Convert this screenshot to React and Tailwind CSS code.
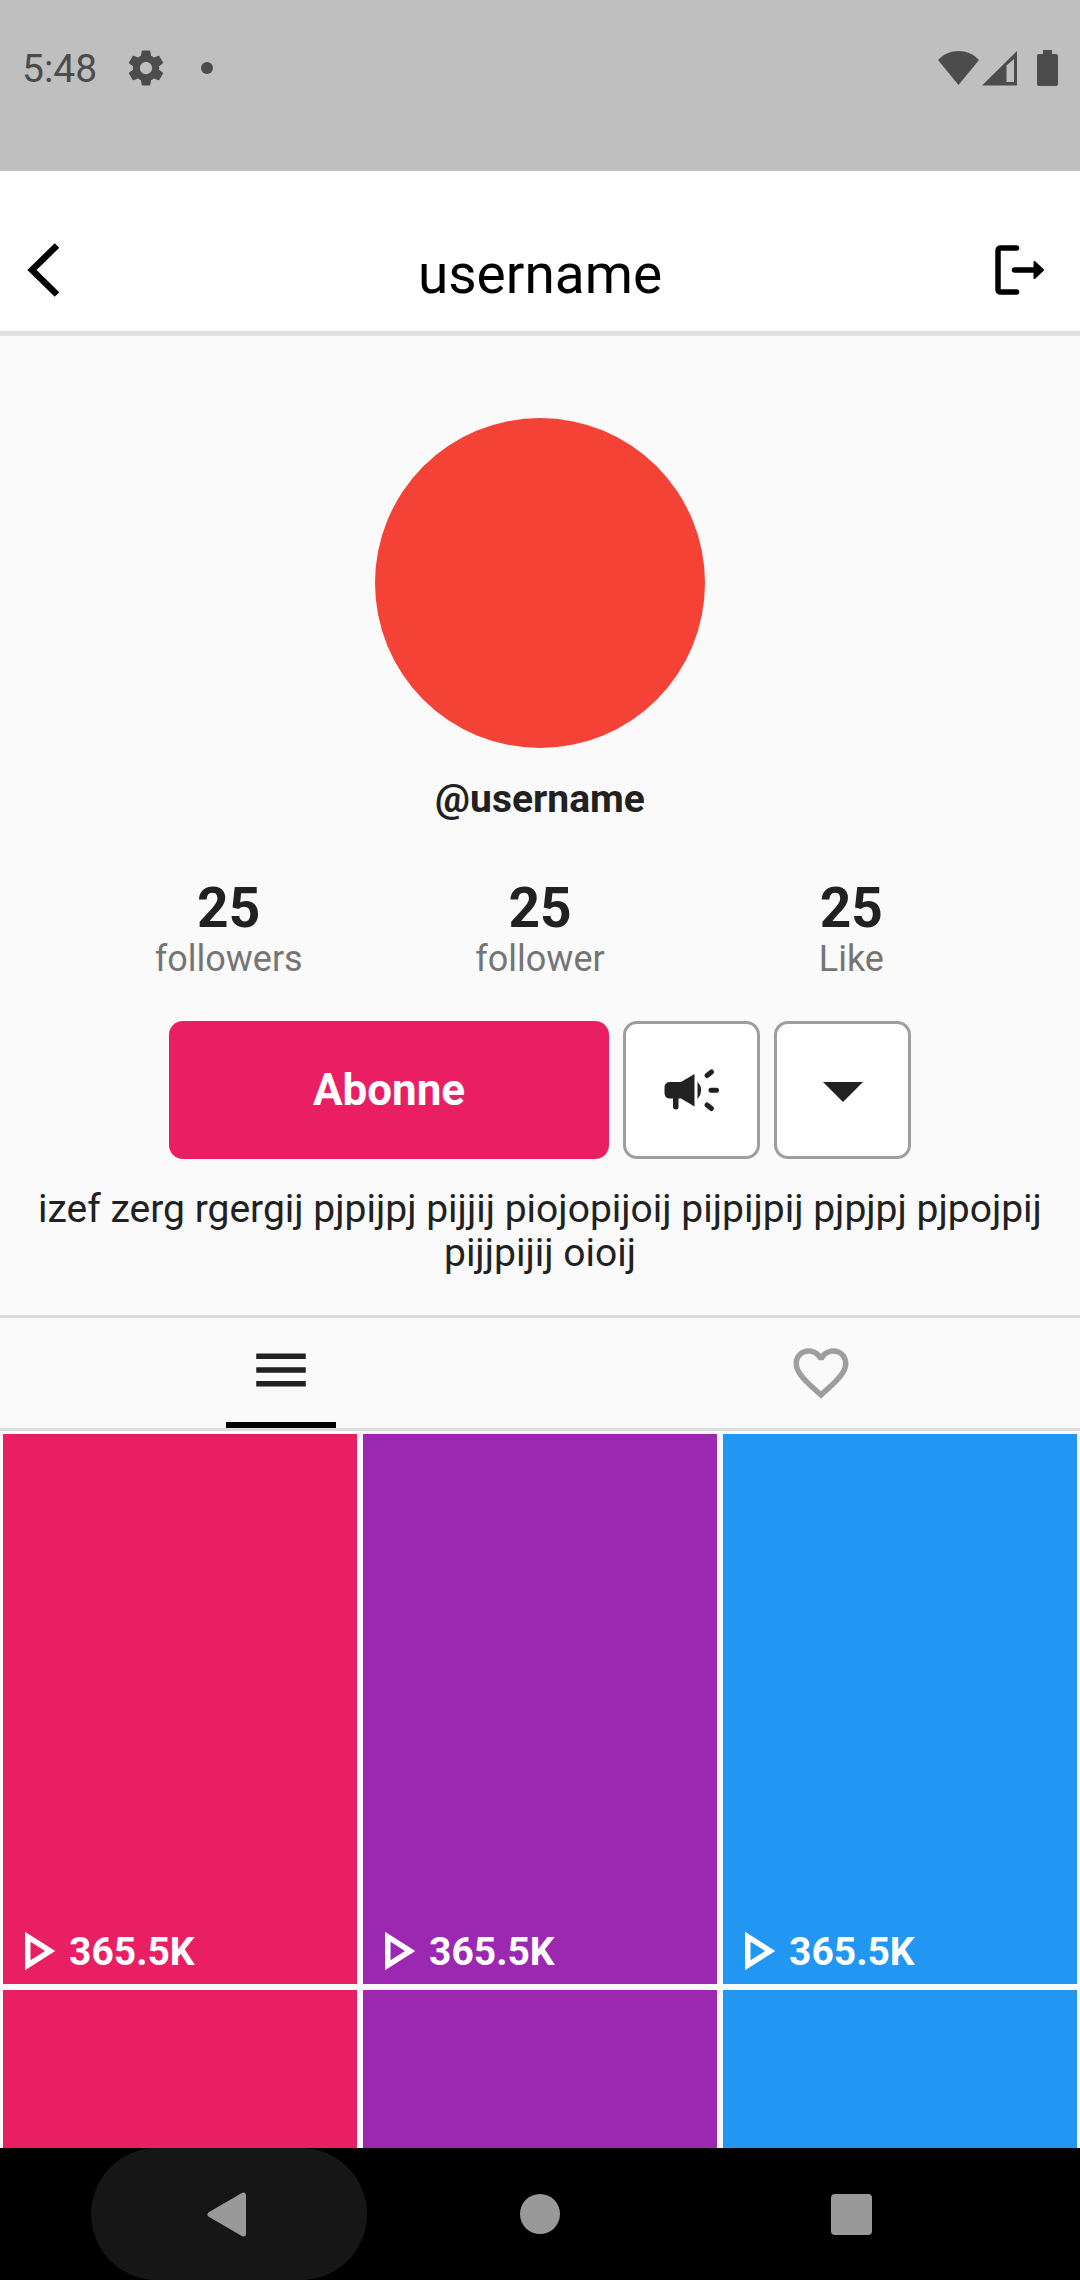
import { useState } from "react";

const STATS = [
  { value: "25", label: "followers" },
  { value: "25", label: "follower" },
  { value: "25", label: "Like" },
];

const VIDEOS = [
  { id: 1, color: "bg-[#e91e63]", views: "365.5K" },
  { id: 2, color: "bg-[#9c27b0]", views: "365.5K" },
  { id: 3, color: "bg-[#2196f3]", views: "365.5K" },
  { id: 4, color: "bg-[#e91e63]" },
  { id: 5, color: "bg-[#9c27b0]" },
  { id: 6, color: "bg-[#2196f3]" },
];

function StatusBar() {
  return (
    <div className="flex h-[171px] shrink-0 items-start justify-between bg-[#bfbfbf] px-[22px] pt-[46px] text-[#4c4c4c]">
      <div className="flex h-[44px] items-center">
        <span className="pt-[2px] text-[39px] leading-[46px]">5:48</span>
        <svg viewBox="0 0 24 24" className="ml-[28px] size-[42px]" fill="currentColor" aria-hidden="true">
          <path d="M19.43 12.98c.04-.32.07-.64.07-.98s-.03-.66-.07-.98l2.11-1.65c.19-.15.24-.42.12-.64l-2-3.46c-.12-.22-.39-.3-.61-.22l-2.49 1c-.52-.4-1.08-.73-1.69-.98l-.38-2.65C14.46 2.18 14.25 2 14 2h-4c-.25 0-.46.18-.49.42l-.38 2.65c-.61.25-1.17.59-1.69.98l-2.49-1c-.23-.09-.49 0-.61.22l-2 3.46c-.13.22-.07.49.12.64l2.11 1.65c-.04.32-.07.65-.07.98s.03.66.07.98l-2.11 1.65c-.19.15-.24.42-.12.64l2 3.46c.12.22.39.3.61.22l2.49-1c.52.4 1.08.73 1.69.98l.38 2.65c.03.24.24.42.49.42h4c.25 0 .46-.18.49-.42l.38-2.65c.61-.25 1.17-.59 1.69-.98l2.49 1c.23.09.49 0 .61-.22l2-3.46c.12-.22.07-.49-.12-.64l-2.11-1.65zM12 15.5c-1.93 0-3.5-1.57-3.5-3.5s1.57-3.5 3.5-3.5 3.5 1.57 3.5 3.5-1.57 3.5-3.5 3.5z" />
        </svg>
        <span className="ml-[34px] size-3 rounded-full bg-[#4c4c4c]" />
      </div>
      <div className="flex h-[44px] items-center">
        <svg viewBox="0 0 41 36" className="h-[36px] w-[41px]" fill="currentColor" aria-hidden="true">
          <path d="M0 10C11 -2 30 -2 41 10L20.500 35Z" />
        </svg>
        <svg viewBox="0 0 36 36" className="ml-[3px] size-[36px]" fill="currentColor" aria-hidden="true">
          <path fillRule="evenodd" d="M0 35.500L35 1V35.500H0ZM24.500 15.500V32H32V9Z" />
        </svg>
        <svg viewBox="0 0 21 36" className="ml-[19px] h-[36px] w-[21px]" fill="currentColor" aria-hidden="true">
          <path d="M6 0H15V4H19Q21 4 21 6V34Q21 36 19 36H2Q0 36 0 34V6Q0 4 2 4H6Z" />
        </svg>
      </div>
    </div>
  );
}

function Header() {
  return (
    <header className="grid shrink-0 grid-cols-[1fr_auto_1fr] items-start border-b-[5px] border-[#dfdfdf] bg-white px-[11px] pt-[66px] pb-[25px] text-black">
      <button type="button" aria-label="Back" className="size-[66px]">
        <svg viewBox="0 0 66 66" className="size-full" fill="none" stroke="currentColor" strokeWidth="6.5">
          <path d="M46 8.500L21 33L46 57.500" />
        </svg>
      </button>
      <h1 className="pt-[5px] text-[55px] leading-[64px]">username</h1>
      <button type="button" aria-label="Log out" className="mr-4 size-[66px] justify-self-end">
        <svg viewBox="0 0 66 66" className="size-full" fill="none" stroke="currentColor" strokeWidth="5.5" strokeLinecap="round">
          <path d="M29.500 11H14Q11 11 11 14V52Q11 55 14 55H29.500" />
          <path d="M27.500 33H48" />
          <path d="M47.500 25L56 33L47.500 41Z" fill="currentColor" strokeWidth="2" strokeLinejoin="round" />
        </svg>
      </button>
    </header>
  );
}

function Stats() {
  return (
    <dl className="mt-[56px] grid w-full grid-cols-3 px-[73px] text-center">
      {STATS.map((stat) => (
        <div key={stat.label} className="flex flex-col-reverse">
          <dt className="text-[36px] leading-[40px] text-[#757575]">{stat.label}</dt>
          <dd className="text-[55px] leading-[62px] font-bold">{stat.value}</dd>
        </div>
      ))}
    </dl>
  );
}

function Actions() {
  const square =
    "flex h-[138px] w-[137px] items-center justify-center rounded-[14px] border-[3px] border-[#9e9e9e] bg-white";
  return (
    <div className="mt-[42px] flex justify-center gap-[14px]">
      <button type="button" className="h-[138px] w-[440px] rounded-[14px] bg-[#e91e63] text-[44px] font-bold text-white">
        Abonne
      </button>
      <button type="button" aria-label="Announcements" className={square}>
        <svg viewBox="0 0 66 66" className="size-[66px]" fill="currentColor" aria-hidden="true">
          <path d="M10.500 25H22L35.500 17V49.500L22 41.500H19.500V50Q19.500 52.500 17 52.500Q14 52.500 14 50V41.500H10.500Q5.500 41 5.500 36V30.500Q5.500 25.500 10.500 25Z" />
          <path d="M38.500 24.500Q46 33 38.500 42Z" />
          <path d="M48 18.500L52.500 15M52 33.300H57.500M48 48L52.500 51.500" fill="none" stroke="currentColor" strokeWidth="5" strokeLinecap="round" />
        </svg>
      </button>
      <button type="button" aria-label="More" className={square}>
        <svg viewBox="0 0 24 24" className="size-[96px] shrink-0" fill="currentColor" aria-hidden="true">
          <path d="M7 10l5 5 5-5z" />
        </svg>
      </button>
    </div>
  );
}

function Tabs({ tab, onChange }) {
  return (
    <div role="tablist" className="flex h-[116px] items-stretch justify-around border-y-[3px] border-[#dddddd]">
      <button
        type="button"
        role="tab"
        aria-label="Videos"
        aria-selected={tab === "videos"}
        onClick={() => onChange("videos")}
        className={`flex w-[110px] items-center justify-center border-b-[6px] ${tab === "videos" ? "border-black text-[#212121]" : "border-transparent text-[#9e9e9e]"}`}
      >
        <svg viewBox="0 0 24 24" className="size-[66px]" fill="currentColor" aria-hidden="true">
          <path d="M3 18h18v-2H3v2zm0-5h18v-2H3v2zm0-7v2h18V6H3z" />
        </svg>
      </button>
      <button
        type="button"
        role="tab"
        aria-label="Liked"
        aria-selected={tab === "liked"}
        onClick={() => onChange("liked")}
        className={`flex w-[66px] items-center justify-center ${tab === "liked" ? "text-[#212121]" : "text-[#9e9e9e]"}`}
      >
        <svg viewBox="0 0 24 24" className="size-[66px]" fill="currentColor" aria-hidden="true">
          <path d="M16.500 3c-1.740 0-3.410.81-4.500 2.090C10.910 3.810 9.240 3 7.500 3 4.420 3 2 5.420 2 8.500c0 3.780 3.400 6.860 8.550 11.540L12 21.350l1.450-1.320C18.600 15.360 22 12.280 22 8.500 22 5.420 19.580 3 16.500 3zm-4.400 15.550l-.1.100-.1-.1C7.140 14.240 4 11.390 4 8.500 4 6.500 5.500 5 7.500 5c1.540 0 3.040.99 3.570 2.360h1.870C13.460 5.990 14.960 5 16.500 5c2 0 3.500 1.500 3.500 3.500 0 2.890-3.140 5.740-7.900 10.050z" />
        </svg>
      </button>
    </div>
  );
}

function VideoGrid() {
  return (
    <ul className="grid grid-cols-3 gap-[6px] p-[3px]">
      {VIDEOS.map((video) => (
        <li key={video.id}>
          <a
            href={`#video-${video.id}`}
            aria-label={`Video ${video.id}`}
            className={`flex h-[550px] items-end text-white ${video.color}`}
          >
            {video.views && (
              <span className="flex h-[66px] items-center">
                <svg viewBox="0 0 24 24" className="size-[66px]" fill="currentColor" aria-hidden="true">
                  <path d="M10 8.640L15.270 12 10 15.360V8.640M8 5v14l11-7L8 5z" />
                </svg>
                <span className="pt-[2px] text-[39px] leading-[46px] font-bold">{video.views}</span>
              </span>
            )}
          </a>
        </li>
      ))}
    </ul>
  );
}

function NavBar() {
  return (
    <nav className="grid h-[132px] shrink-0 grid-cols-3 justify-items-center bg-black px-[73px] text-[#999999]">
      <button type="button" aria-label="Back" className="flex h-full w-[276px] items-center justify-center rounded-full bg-[#161616]">
        <svg viewBox="0 0 48 48" className="size-[48px]" fill="currentColor" stroke="currentColor" strokeWidth="5" strokeLinejoin="round" aria-hidden="true">
          <path d="M5 24.500L38.500 5V44Z" />
        </svg>
      </button>
      <button type="button" aria-label="Home" className="flex w-full items-center justify-center">
        <span className="size-[40px] rounded-full bg-[#999999]" />
      </button>
      <button type="button" aria-label="Recent apps" className="flex w-full items-center justify-center">
        <span className="size-[41px] rounded-[4px] bg-[#999999]" />
      </button>
    </nav>
  );
}

export default function App() {
  const [tab, setTab] = useState("videos");
  return (
    <div className="flex h-screen flex-col bg-[#fafafa] font-[Roboto,sans-serif] text-[#212121]">
      <StatusBar />
      <Header />
      <main className="min-h-0 flex-1 overflow-y-auto [scrollbar-width:none]">
        <section className="flex flex-col items-center pt-[82px] pb-[40px]">
          <div className="size-[330px] rounded-full bg-[#f44336]" />
          <p className="mt-[29px] text-[39px] leading-[44px] font-bold">@username</p>
          <Stats />
          <Actions />
          <p className="mt-[28px] px-[27px] text-center text-[39px] leading-[44px]">
            izef zerg rgergij pjpijpj pijjij piojopijoij pijpijpij pjpjpj pjpojpij pijjpijij oioij
          </p>
        </section>
        <Tabs tab={tab} onChange={setTab} />
        <VideoGrid />
      </main>
      <NavBar />
    </div>
  );
}
